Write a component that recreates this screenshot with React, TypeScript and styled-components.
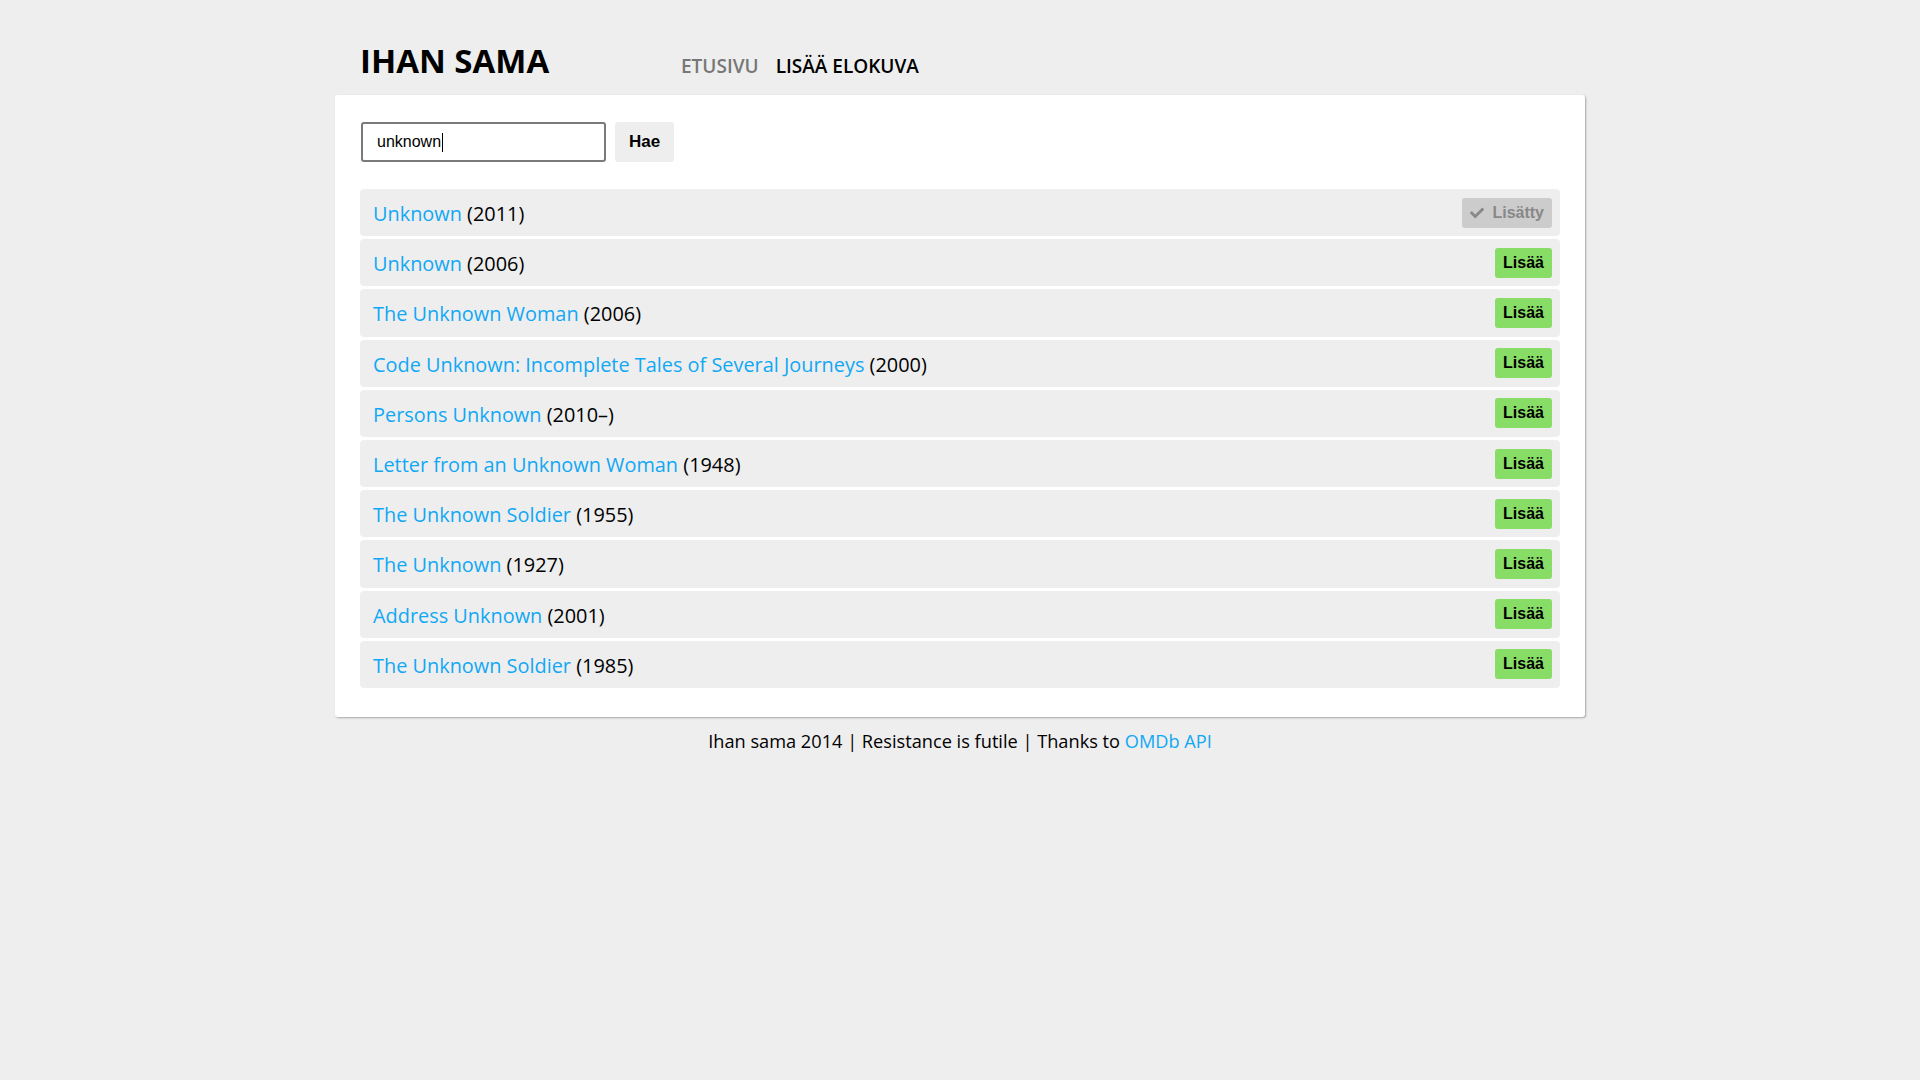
import React from "react";
import styled, { createGlobalStyle } from "styled-components";
import { FaCheck } from "react-icons/fa";

const GlobalStyle = createGlobalStyle`
  html, body {
    margin: 0;
    padding: 0;
    background: #eeeeee;
    font-family: "Open Sans", "Noto Sans", sans-serif;
    color: #000;
  }
  * { box-sizing: border-box; }
`;

const Page = styled.div`
  width: 1250px;
  margin: 0 auto;
`;

const Header = styled.header`
  display: flex;
  align-items: baseline;
  padding: 38px 25px 11px;
`;

const Logo = styled.h1`
  margin: 0;
  width: 321px;
  font-size: 33px;
  line-height: 46px;
  font-weight: 700;
`;

const Nav = styled.nav`
  display: flex;
  gap: 17px;
`;

const NavLink = styled.a<{ $active?: boolean }>`
  font-size: 19px;
  font-weight: 600;
  text-transform: uppercase;
  color: ${(p) => (p.$active ? "#000" : "#777")};
  text-decoration: none;
`;

const Card = styled.main`
  background: #fff;
  border-radius: 3px;
  box-shadow: 1px 1px 2px rgba(0, 0, 0, 0.3);
  padding: 27px 25px 29px;
`;

const SearchForm = styled.form`
  display: flex;
  align-items: center;
  gap: 9px;
  margin: 0 0 27px 1px;
`;

const InputWrap = styled.div`
  position: relative;
  display: flex;
`;

const SearchInput = styled.input`
  width: 245px;
  height: 40px;
  border: 2px solid #7a7a7a;
  border-radius: 3px;
  padding: 0 14px;
  font-family: "Liberation Sans", Arial, sans-serif;
  font-size: 16px;
  color: #000;
  outline: none;
  caret-color: transparent;
`;

const Caret = styled.span`
  position: absolute;
  left: 81px;
  top: 11px;
  width: 1px;
  height: 19px;
  background: #000;
  pointer-events: none;
`;

const SearchButton = styled.button`
  height: 40px;
  padding: 0 14px;
  border: none;
  border-radius: 3px;
  background: #eeeeee;
  font-family: "Liberation Sans", Arial, sans-serif;
  font-weight: 700;
  font-size: 17px;
  color: #000;
`;

const List = styled.ul`
  list-style: none;
  margin: 0;
  padding: 0;
  display: flex;
  flex-direction: column;
  gap: 3px;
`;

const Row = styled.li`
  display: flex;
  align-items: center;
  justify-content: space-between;
  height: 47.2px;
  padding: 0 8px 0 13px;
  background: #eeeeee;
  border-radius: 4px;
`;

const MovieText = styled.span`
  font-size: 19.9px;
  padding-top: 2px;
  color: #000;
`;

const MovieLink = styled.a`
  color: #11a8f5;
  text-decoration: none;
`;

const AddButton = styled.button<{ $added?: boolean }>`
  display: inline-flex;
  align-items: center;
  gap: 8px;
  height: 30px;
  padding: 0 8px;
  border: none;
  border-radius: 3px;
  background: ${(p) => (p.$added ? "#cccccc" : "#88dd66")};
  color: ${(p) => (p.$added ? "#888888" : "#000")};
  font-family: "Liberation Sans", Arial, sans-serif;
  font-weight: 700;
  font-size: 16px;
`;

const Footer = styled.footer`
  text-align: center;
  font-size: 18.2px;
  padding-top: 12px;
`;

const FooterLink = styled.a`
  color: #11a8f5;
  text-decoration: none;
`;

const movies = [
  { title: "Unknown", year: "2011", added: true },
  { title: "Unknown", year: "2006" },
  { title: "The Unknown Woman", year: "2006" },
  { title: "Code Unknown: Incomplete Tales of Several Journeys", year: "2000" },
  { title: "Persons Unknown", year: "2010–" },
  { title: "Letter from an Unknown Woman", year: "1948" },
  { title: "The Unknown Soldier", year: "1955" },
  { title: "The Unknown", year: "1927" },
  { title: "Address Unknown", year: "2001" },
  { title: "The Unknown Soldier", year: "1985" },
];

export default function App() {
  return (
    <>
      <GlobalStyle />
      <Page>
        <Header>
          <Logo>IHAN SAMA</Logo>
          <Nav>
            <NavLink href="#">Etusivu</NavLink>
            <NavLink href="#" $active>
              Lisää elokuva
            </NavLink>
          </Nav>
        </Header>
        <Card>
          <SearchForm onSubmit={(e) => e.preventDefault()}>
            <InputWrap>
              <SearchInput defaultValue="unknown" />
              <Caret />
            </InputWrap>
            <SearchButton type="submit">Hae</SearchButton>
          </SearchForm>
          <List>
            {movies.map((m, i) => (
              <Row key={i}>
                <MovieText>
                  <MovieLink href="#">{m.title}</MovieLink> ({m.year})
                </MovieText>
                {m.added ? (
                  <AddButton $added>
                    <FaCheck size={14} />
                    Lisätty
                  </AddButton>
                ) : (
                  <AddButton>Lisää</AddButton>
                )}
              </Row>
            ))}
          </List>
        </Card>
        <Footer>
          Ihan sama 2014 | Resistance is futile | Thanks to{" "}
          <FooterLink href="#">OMDb API</FooterLink>
        </Footer>
      </Page>
    </>
  );
}
